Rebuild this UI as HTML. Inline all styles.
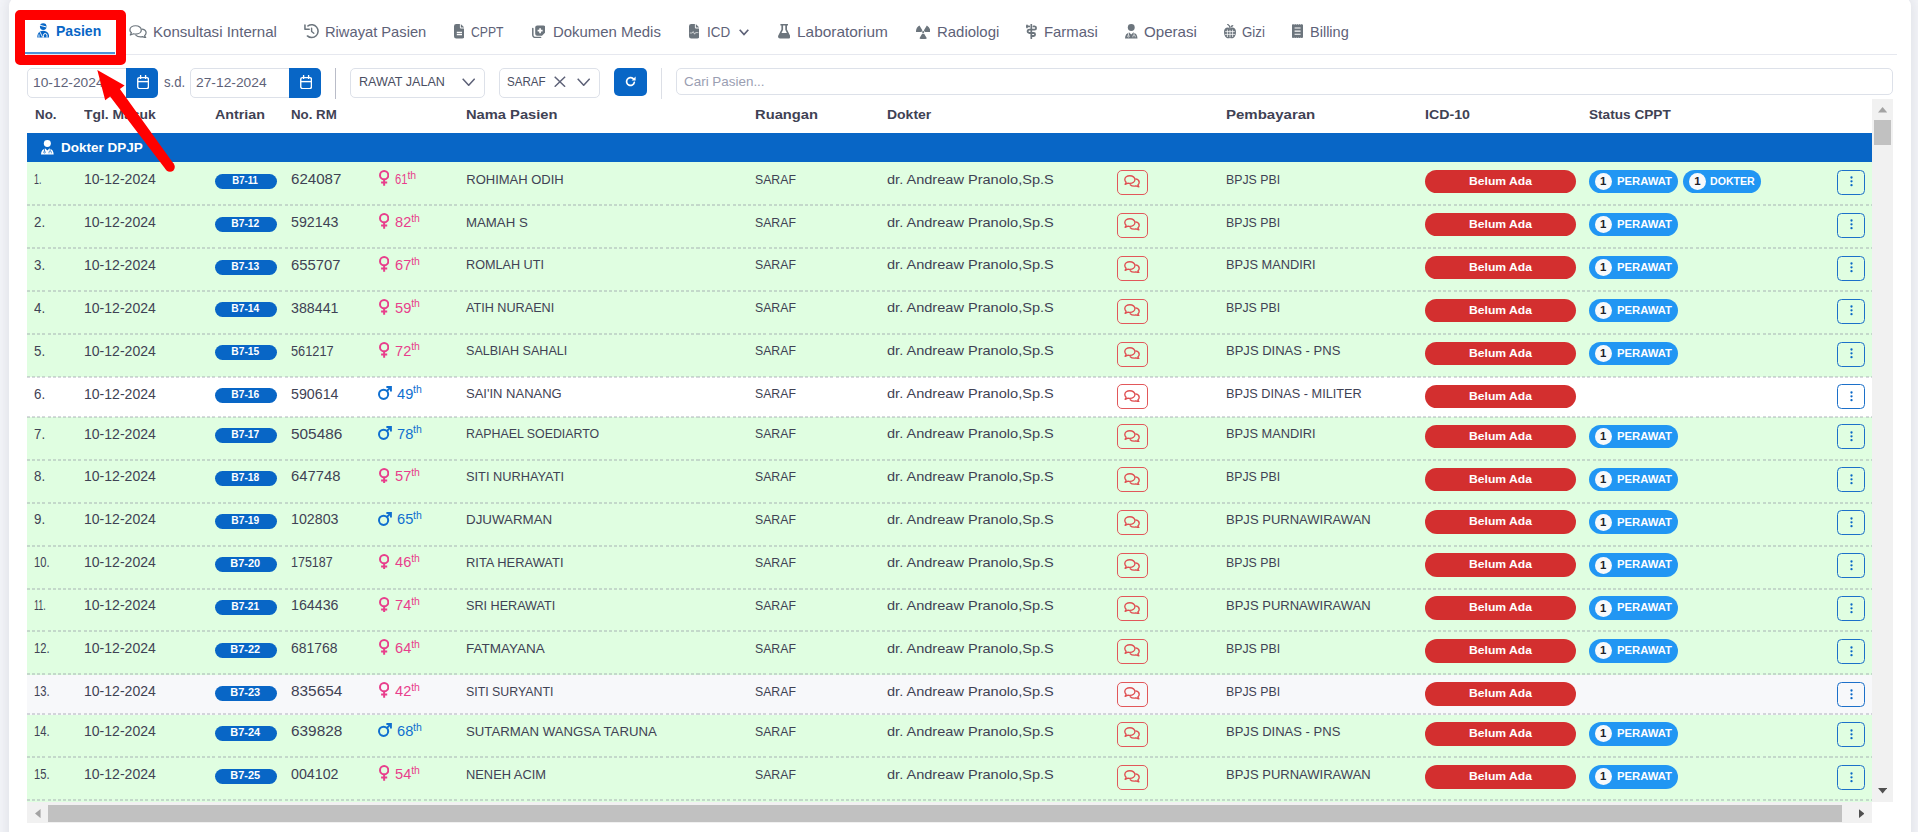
<!DOCTYPE html>
<html lang="id"><head><meta charset="utf-8"><title>Pasien</title>
<style>
html,body{margin:0;padding:0}
body{width:1918px;height:832px;overflow:hidden;background:#f4f5f9;font-family:"Liberation Sans",sans-serif;position:relative;color:#3f4254}
.card{position:absolute;left:9px;top:-3px;width:1902px;height:900px;background:#fff;border-radius:9px;box-shadow:0 0 14px 2px rgba(50,55,80,.105)}
.a{position:absolute}
.t{position:absolute;white-space:nowrap;line-height:21px;font-size:13px;transform-origin:0 0}
.tab{font-size:15px;color:#5e6278;text-decoration:none}
.tab.act{color:#0866c6;font-weight:bold}
.h{font-weight:bold;font-size:13px;color:#3f4254}
.f14{font-size:14px}
.row{position:absolute;left:27px;width:1845px}
.dl{position:absolute;left:27px;width:1845px;height:2px;background:repeating-linear-gradient(90deg,rgba(140,144,158,.34) 0,rgba(140,144,158,.34) 3px,transparent 3px,transparent 5.15px)}
.g{background:#e0fee1}
.w{background:#fff}
.s{background:#f7f8fa}
.q{position:absolute;left:215px;width:62px;height:15px;border-radius:8px;background:#0866c6;color:#fff;font-weight:bold;font-size:10.5px;line-height:13.6px;text-align:center;text-indent:-1px}
.icd{position:absolute;left:1425px;width:151px;height:23.6px;border-radius:12px;background:#d32f2f;color:#fff;font-weight:bold;font-size:11.4px;line-height:22.2px;text-align:center}
.cp{position:absolute;height:23.6px;border-radius:12px;background:#2196f3;color:#fff;font-weight:bold;font-size:11.4px;line-height:24px}
.cp i{position:absolute;left:5.8px;top:3.2px;width:17px;height:17px;border-radius:50%;background:#f8f9fb;color:#1e2129;font-style:normal;text-align:center;line-height:17px;font-size:11.4px}
.cp b{position:absolute;left:28.5px;top:-0.9px;transform-origin:0 0}
.icd,.q{letter-spacing:0}
.icd u,.q u{display:inline-block;text-decoration:none}
.cb{position:absolute;left:1117px;width:31px;height:25px;box-sizing:border-box;border:1px solid #e2575a;border-radius:5px}
.ab{position:absolute;left:1837px;width:28px;height:25px;box-sizing:border-box;border:1px solid #1c70c9;border-radius:4.5px}
button{padding:0;margin:0;background:transparent;appearance:none;-webkit-appearance:none;display:block}
.f{color:#e83e8c}
.m{color:#0f6fd0}
.ag{font-size:12.5px}
.dg{display:inline-block;text-decoration:none;transform-origin:0 0}
.sp{position:absolute;top:-4.15px;font-size:10.5px;line-height:21px;vertical-align:baseline}
.inp{position:absolute;box-sizing:border-box;border:1px solid #dde1e9;background:#fff;border-radius:5px}
.btn{position:absolute;background:#0866c6}
</style></head>
<body>
<div class="card"></div>
<svg class="a" style="left:36.5px;top:23px" width="12.5" height="14.5" viewBox="0 0 14 16" preserveAspectRatio="none"><circle cx="7" cy="3.9" r="3.7" fill="#0866c6"/><path d="M3.5 2.6 L10.6 4.4" stroke="#fff" stroke-width="1.1"/><path d="M0.3 16 C0.3 11.5 2.6 9.2 5.2 8.8 L7 8.6 L8.8 8.8 C11.4 9.2 13.7 11.5 13.7 16 Z" fill="#0866c6"/><path d="M3.2 9.6 L6.4 16 M2.2 16 L2.2 12.6" stroke="#fff" stroke-width="1"/><path d="M7.2 16 V13.6 a2 2 0 0 1 4 0 V16" fill="none" stroke="#fff" stroke-width="1.1"/></svg>
<a id="tab0" class="t tab act" style="left:56px;top:20.4px;transform:scaleX(0.9354);">Pasien</a>
<svg class="a" style="left:128.5px;top:24.5px" width="18" height="13.5" viewBox="0 0 18 14" preserveAspectRatio="none"><path d="M6.6 0.8 C3.3 0.8 0.9 2.7 0.9 5.1 C0.9 6.3 1.5 7.3 2.4 8.1 L1.3 10.4 L4.6 9.1 C5.2 9.3 5.9 9.4 6.6 9.4 C9.9 9.4 12.3 7.5 12.3 5.1 C12.3 2.7 9.9 0.8 6.6 0.8 Z" fill="none" stroke="#6c757d" stroke-width="1.25" stroke-linejoin="round"/><path d="M13.3 4.3 C15.6 4.8 17.1 6.3 17.1 8.1 C17.1 9.3 16.5 10.3 15.6 11.1 L16.7 13.3 L13.4 12.1 C12.8 12.3 12.1 12.4 11.4 12.4 C9.6 12.4 8 11.8 7 10.8" fill="none" stroke="#6c757d" stroke-width="1.25" stroke-linejoin="round" stroke-linecap="round"/></svg>
<a id="tab1" class="t tab" style="left:153px;top:21.3px;transform:scaleX(1.0040);">Konsultasi Internal</a>
<svg class="a" style="left:304px;top:24px" width="15" height="15" viewBox="0 0 15 15" preserveAspectRatio="none"><path d="M4 1.95 A6.4 6.4 0 1 1 3.4 11.95" fill="none" stroke="#6c757d" stroke-width="1.55" stroke-linecap="round"/><path d="M0.95 1.1 V5.3 H5.2" fill="none" stroke="#6c757d" stroke-width="1.55" stroke-linecap="round" stroke-linejoin="round"/><path d="M7.6 4.3 V7.5 L9.8 9.3" fill="none" stroke="#6c757d" stroke-width="1.4" stroke-linecap="round" stroke-linejoin="round"/></svg>
<a id="tab2" class="t tab" style="left:325px;top:21.3px;transform:scaleX(0.9793);">Riwayat Pasien</a>
<svg class="a" style="left:454.1px;top:24.2px" width="10.4" height="14.4" viewBox="0 0 10.4 14.4" preserveAspectRatio="none"><path d="M2.2 0 H5.9 V3.4 a1.1 1.1 0 0 0 1.1 1.1 H10.4 V12.2 a2.2 2.2 0 0 1 -2.2 2.2 H2.2 A2.2 2.2 0 0 1 0 12.2 V2.2 A2.2 2.2 0 0 1 2.2 0 Z" fill="#6c757d"/><path d="M6.8 0.1 L10.3 3.6 H6.8 Z" fill="#6c757d"/><path d="M2.8 8.5 H8 M2.8 10.6 H8" stroke="#fff" stroke-width="1.35"/></svg>
<a id="tab3" class="t tab" style="left:471.25px;top:21.3px;transform:scaleX(0.8122);">CPPT</a>
<svg class="a" style="left:531.6px;top:24.8px" width="13.2" height="13.4" viewBox="0 0 13.2 13.4" preserveAspectRatio="none"><path d="M5.2 0.5 H11.4 A1.8 1.8 0 0 1 13.2 2.3 V7.6 L10 10.8 H5.2 A2 2 0 0 1 3.2 8.8 V2.5 A2 2 0 0 1 5.2 0.5 Z" fill="#6c757d"/><path d="M8.1 3.2 V8.2 M5.6 5.7 H10.6" stroke="#fff" stroke-width="1.7"/><path d="M0.8 3.4 V10 a2.6 2.6 0 0 0 2.6 2.6 H8.6" fill="none" stroke="#6c757d" stroke-width="1.5" stroke-linecap="round"/></svg>
<a id="tab4" class="t tab" style="left:552.5px;top:21.3px;transform:scaleX(0.9955);">Dokumen Medis</a>
<svg class="a" style="left:688.7px;top:24.2px" width="10.4" height="14.4" viewBox="0 0 10.4 14.4" preserveAspectRatio="none"><path d="M2.2 0 H5.9 V3.4 a1.1 1.1 0 0 0 1.1 1.1 H10.4 V12.2 a2.2 2.2 0 0 1 -2.2 2.2 H2.2 A2.2 2.2 0 0 1 0 12.2 V2.2 A2.2 2.2 0 0 1 2.2 0 Z" fill="#6c757d"/><path d="M6.8 0.1 L10.3 3.6 H6.8 Z" fill="#6c757d"/><path d="M0.8 9 H3.2 L4.2 7.6 L5.6 10.2 L6.6 8.6 H9.4" fill="none" stroke="#fff" stroke-width="0.75" stroke-linejoin="round" opacity="0.85"/></svg>
<a id="tab5" class="t tab" style="left:706.7px;top:21.3px;transform:scaleX(0.8977);">ICD</a>
<svg class="a" style="left:777.7px;top:24.3px" width="12.4" height="14.6" viewBox="0 0 12.4 14.6" preserveAspectRatio="none"><path d="M2.4 0 H10 V1.5 H9 V5.4 L12.1 11.6 C12.8 13 11.9 14.6 10.4 14.6 H2 C0.5 14.6 -0.4 13 0.3 11.6 L3.4 5.4 V1.5 H2.4 Z" fill="#6c757d"/><path d="M5.1 1.5 H7.3 V5.8 L8.9 8.9 H3.5 L5.1 5.8 Z" fill="#fff"/></svg>
<a id="tab6" class="t tab" style="left:796.9px;top:21.3px;transform:scaleX(1.0278);">Laboratorium</a>
<svg class="a" style="left:915.5px;top:25px" width="14.3" height="13.5" viewBox="0 0 14.5 13.5" preserveAspectRatio="none"><path d="M3.5 0.4 L6.6 5.6 A1.5 1.5 0 0 0 5.7 7.1 H0 A7.3 7.3 0 0 1 3.5 0.4 Z" fill="#6c757d"/><path d="M11 0.4 L7.9 5.6 A1.5 1.5 0 0 1 8.8 7.1 H14.5 A7.3 7.3 0 0 0 11 0.4 Z" fill="#6c757d"/><path d="M7.25 8.9 A1.6 1.6 0 0 0 8.1 8.6 L11 13.3 A7.3 7.3 0 0 1 3.5 13.3 L6.4 8.6 A1.6 1.6 0 0 0 7.25 8.9 Z" fill="#6c757d"/><circle cx="7.25" cy="7.1" r="1.05" fill="#6c757d"/></svg>
<a id="tab7" class="t tab" style="left:936.5px;top:21.3px;transform:scaleX(0.9953);">Radiologi</a>
<svg class="a" style="left:1026px;top:24px" width="11" height="15" viewBox="0 0 11 15" preserveAspectRatio="none"><path d="M5.3 0.6 V14.4" stroke="#6c757d" stroke-width="1.7" stroke-linecap="round"/><path d="M0.9 2.4 H3.2 M7.4 2.4 H8.6 C10.6 2.4 10.6 5.6 8.6 5.6 H3.4 C1 5.6 1 9 3.4 9 H7.6 C9.6 9 9.6 12 7.6 12 H5.6" fill="none" stroke="#6c757d" stroke-width="1.8" stroke-linecap="round"/><path d="M1 1.4 V3.6" stroke="#6c757d" stroke-width="1.6" stroke-linecap="round"/></svg>
<a id="tab8" class="t tab" style="left:1043.75px;top:21.3px;transform:scaleX(0.9922);">Farmasi</a>
<svg class="a" style="left:1125px;top:24px" width="12.5" height="14.5" viewBox="0 0 13 15" preserveAspectRatio="none"><circle cx="6.5" cy="3.6" r="3.6" fill="#6c757d"/><path d="M0 15 C0 11.2 2 9.2 4.4 8.7 L6.5 10.8 L8.6 8.7 C11 9.2 13 11.2 13 15 Z" fill="#6c757d"/><path d="M3.6 9.4 V11.6 M9.4 9.4 V11" stroke="#fff" stroke-width="0.8"/><circle cx="3.6" cy="12.6" r="0.9" fill="none" stroke="#fff" stroke-width="0.7"/><path d="M8.2 13.8 V12.6 a1.2 1.2 0 0 1 2.4 0 V13.8" fill="none" stroke="#fff" stroke-width="0.7"/></svg>
<a id="tab9" class="t tab" style="left:1144px;top:21.3px;transform:scaleX(1.0070);">Operasi</a>
<svg class="a" style="left:1223.7px;top:24px" width="12" height="14.5" viewBox="0 0 12 14.5" preserveAspectRatio="none"><path d="M6 4.4 C7.4 3.2 9.6 3.2 10.8 4.6 C12.6 6.6 12.2 10.6 10.4 13 C9.4 14.4 7.6 14.6 6 13.9 C4.4 14.6 2.6 14.4 1.6 13 C-0.2 10.6 -0.6 6.6 1.2 4.6 C2.4 3.2 4.6 3.2 6 4.4 Z" fill="#6c757d"/><path d="M3.4 5.6 V13 M6 5.8 V13.4 M8.6 5.6 V13 M1.2 7.6 H10.8 M1 10.4 H11" stroke="#fff" stroke-width="0.75"/><path d="M6 4.2 C6 2.6 5.2 1.2 3.6 0.3" fill="none" stroke="#6c757d" stroke-width="1.2" stroke-linecap="round"/><path d="M6.2 3.4 C6.6 1.6 8 0.8 9.4 1 C9.2 2.6 7.8 3.6 6.2 3.4 Z" fill="#6c757d"/></svg>
<a id="tab10" class="t tab" style="left:1241.9px;top:21.3px;transform:scaleX(0.8842);">Gizi</a>
<svg class="a" style="left:1291.9px;top:24.3px" width="11.2" height="14.2" viewBox="0 0 11.2 14.2" preserveAspectRatio="none"><path d="M0 0 L0.9 0.7 L1.9 0 L2.8 0.7 L3.7 0 L4.7 0.7 L5.6 0 L6.5 0.7 L7.5 0 L8.4 0.7 L9.3 0 L10.3 0.7 L11.2 0 V14.2 L10.3 13.5 L9.3 14.2 L8.4 13.5 L7.5 14.2 L6.5 13.5 L5.6 14.2 L4.7 13.5 L3.7 14.2 L2.8 13.5 L1.9 14.2 L0.9 13.5 L0 14.2 Z" fill="#6c757d"/><path d="M2.6 4 H8.6 M2.6 7.1 H8.6 M2.6 10.2 H8.6" stroke="#fff" stroke-width="1.1"/></svg>
<a id="tab11" class="t tab" style="left:1309.75px;top:21.3px;transform:scaleX(0.9680);">Billing</a>
<svg class="a" style="left:739px;top:28.5px" width="10" height="7" viewBox="0 0 10 7"><path d="M0.7 0.8 L5 5.6 L9.3 0.8" fill="none" stroke="#5e6278" stroke-width="1.7"/></svg>
<div class="a" style="left:27px;top:53.6px;width:1870px;height:1.2px;background:#e6e8ef"></div>
<div class="a" style="left:25px;top:52.2px;width:90px;height:2.2px;background:#4d93da"></div>
<div class="inp" style="left:27px;top:68px;width:102px;height:30px;border-radius:5px 0 0 5px"></div>
<div class="btn" style="left:125.6px;top:67.7px;width:32.2px;height:30.6px;border-radius:0 5px 5px 0"></div>
<svg class="a" style="left:137px;top:74.6px" width="12.2" height="14.4" viewBox="0 0 12.2 14.4" preserveAspectRatio="none"><rect x="0.75" y="2.6" width="10.7" height="11" rx="1.8" fill="none" stroke="#fff" stroke-width="1.4"/><path d="M0.8 6.6 H11.4" stroke="#fff" stroke-width="1.4"/><path d="M3.6 0.6 V3.4 M8.6 0.6 V3.4" stroke="#fff" stroke-width="1.4" stroke-linecap="round"/></svg>
<span id="d1" class="t " style="left:33px;top:72.3px;transform:scaleX(1.0624);color:#5e6278">10-12-2024</span>
<span id="sd" class="t f14" style="left:163.7px;top:71.8px;transform:scaleX(0.9412);color:#5e6278">s.d.</span>
<div class="inp" style="left:190px;top:68px;width:102px;height:30px;border-radius:5px 0 0 5px"></div>
<div class="btn" style="left:288.7px;top:67.7px;width:32.2px;height:30.6px;border-radius:0 5px 5px 0"></div>
<svg class="a" style="left:300px;top:74.6px" width="12.2" height="14.4" viewBox="0 0 12.2 14.4" preserveAspectRatio="none"><rect x="0.75" y="2.6" width="10.7" height="11" rx="1.8" fill="none" stroke="#fff" stroke-width="1.4"/><path d="M0.8 6.6 H11.4" stroke="#fff" stroke-width="1.4"/><path d="M3.6 0.6 V3.4 M8.6 0.6 V3.4" stroke="#fff" stroke-width="1.4" stroke-linecap="round"/></svg>
<span id="d2" class="t " style="left:195.6px;top:72.3px;transform:scaleX(1.0624);color:#5e6278">27-12-2024</span>
<div class="a" style="left:334.8px;top:67.5px;width:1px;height:31px;background:#b9bcc8"></div>
<div class="inp" style="left:350px;top:68px;width:135px;height:29.6px"></div>
<span id="sel1" class="t " style="left:358.5px;top:71px;transform:scaleX(0.9667);color:#4a4e62">RAWAT JALAN</span>
<svg class="a" style="left:461.5px;top:77.6px" width="13.4" height="8.6" viewBox="0 0 13.4 8.6"><path d="M0.7 0.8 L6.7 7.3 L12.7 0.8" fill="none" stroke="#5e6278" stroke-width="1.5"/></svg>
<div class="inp" style="left:499px;top:68px;width:101px;height:29.6px"></div>
<span id="sel2" class="t " style="left:507px;top:71px;transform:scaleX(0.8929);color:#4a4e62">SARAF</span>
<svg class="a" style="left:554px;top:76px" width="11.8" height="11.4" viewBox="0 0 11.8 11.4"><path d="M0.7 0.7 L11.1 10.7 M11.1 0.7 L0.7 10.7" fill="none" stroke="#5e6278" stroke-width="1.5"/></svg>
<svg class="a" style="left:576.5px;top:77.6px" width="13.4" height="8.6" viewBox="0 0 13.4 8.6"><path d="M0.7 0.8 L6.7 7.3 L12.7 0.8" fill="none" stroke="#5e6278" stroke-width="1.5"/></svg>
<div class="btn" style="left:614px;top:67.5px;width:33px;height:28.2px;border-radius:5px"></div>
<svg class="a" style="left:625px;top:76px" width="11" height="11" viewBox="0 0 11 11" preserveAspectRatio="none"><path d="M9.3 6.3 A3.9 3.9 0 1 1 8.2 2.7" fill="none" stroke="#fff" stroke-width="1.7" stroke-linecap="round"/><path d="M6.6 4.6 L10.6 4.6 L10.6 0.6 Z" fill="#fff"/></svg>
<div class="a" style="left:661px;top:67.5px;width:1px;height:31px;background:#dcdfe6"></div>
<div class="inp" style="left:676px;top:68px;width:1217px;height:26.6px"></div>
<span id="search" class="t " style="left:684.4px;top:71px;transform:scaleX(1.0327);color:#9a9eb2">Cari Pasien...</span>
<span id="h0" class="t h" style="left:34.75px;top:104.3px;transform:scaleX(1.0261);">No.</span>
<span id="h1" class="t h" style="left:84.4px;top:104.3px;transform:scaleX(1.0694);">Tgl. Masuk</span>
<span id="h2" class="t h" style="left:215px;top:104.3px;transform:scaleX(1.0989);">Antrian</span>
<span id="h3" class="t h" style="left:290.5px;top:104.3px;transform:scaleX(1.0216);">No. RM</span>
<span id="h4" class="t h" style="left:466px;top:104.3px;transform:scaleX(1.1305);">Nama Pasien</span>
<span id="h5" class="t h" style="left:755px;top:104.3px;transform:scaleX(1.1326);">Ruangan</span>
<span id="h6" class="t h" style="left:887px;top:104.3px;transform:scaleX(1.0744);">Dokter</span>
<span id="h7" class="t h" style="left:1226px;top:104.3px;transform:scaleX(1.1542);">Pembayaran</span>
<span id="h8" class="t h" style="left:1425px;top:104.3px;transform:scaleX(1.0926);">ICD-10</span>
<span id="h9" class="t h" style="left:1589px;top:104.3px;transform:scaleX(1.0479);">Status CPPT</span>
<div class="a" style="left:27px;top:133px;width:1845px;height:29.8px;background:#0866c6"></div>
<svg class="a" style="left:41px;top:140px" width="12.7" height="14.5" viewBox="0 0 13 15" preserveAspectRatio="none"><circle cx="6.5" cy="3.6" r="3.6" fill="#fff"/><path d="M0 15 C0 11.2 2 9.2 4.4 8.7 L6.5 10.8 L8.6 8.7 C11 9.2 13 11.2 13 15 Z" fill="#fff"/><path d="M3.6 9.4 V11.6 M9.4 9.4 V11" stroke="#0866c6" stroke-width="0.8"/><circle cx="3.6" cy="12.6" r="0.9" fill="none" stroke="#0866c6" stroke-width="0.7"/><path d="M8.2 13.8 V12.6 a1.2 1.2 0 0 1 2.4 0 V13.8" fill="none" stroke="#0866c6" stroke-width="0.7"/></svg>
<span id="grp" class="t h" style="left:61.2px;top:137.4px;transform:scaleX(1.0381);color:#fff">Dokter DPJP</span>
<div class="row g" style="top:162.46px;height:42.94px"></div>
<span id="no1" class="t f14" style="left:34px;top:168.81px;transform:scaleX(0.6332);">1.</span>
<span id="dt1" class="t f14" style="left:83.75px;top:168.81px;transform:scaleX(1.0031);">10-12-2024</span>
<span id="q1" class="q" style="top:173.66px"><u style="transform:scaleX(0.910)">B7-11</u></span>
<span id="rm1" class="t f14" style="left:291px;top:168.81px;transform:scaleX(1.0777);">624087</span>
<svg class="a" style="left:378.7px;top:170.06px" width="10.3" height="15.7" viewBox="0 0 10.3 15.7" preserveAspectRatio="none"><circle cx="5.15" cy="5.15" r="4.15" fill="none" stroke="#e83e8c" stroke-width="2"/><path d="M5.15 9.3 V15.7 M2.1 12.5 H8.2" stroke="#e83e8c" stroke-width="2"/></svg>
<span id="ag1" class="t f14 f" style="left:394.6px;top:168.81px"><u class="dg" style="transform:scaleX(0.804)">61</u><sup class="sp" style="left:12.83px">th</sup></span>
<span id="nm1" class="t " style="left:466.25px;top:168.56px;transform:scaleX(1.0000);">ROHIMAH ODIH</span>
<span id="ru1" class="t " style="left:755px;top:168.56px;transform:scaleX(0.9436);">SARAF</span>
<span id="dr1" class="t " style="left:887px;top:168.56px;transform:scaleX(1.1201);">dr. Andreaw Pranolo,Sp.S</span>
<button class="cb" style="top:169.76px"></button>
<svg class="a" style="left:1124px;top:175.06px" width="16" height="12.5" viewBox="0 0 18 14" preserveAspectRatio="none"><path d="M6.6 0.8 C3.3 0.8 0.9 2.7 0.9 5.1 C0.9 6.3 1.5 7.3 2.4 8.1 L1.3 10.4 L4.6 9.1 C5.2 9.3 5.9 9.4 6.6 9.4 C9.9 9.4 12.3 7.5 12.3 5.1 C12.3 2.7 9.9 0.8 6.6 0.8 Z" fill="none" stroke="#df4f52" stroke-width="1.55" stroke-linejoin="round"/><path d="M13.3 4.3 C15.6 4.8 17.1 6.3 17.1 8.1 C17.1 9.3 16.5 10.3 15.6 11.1 L16.7 13.3 L13.4 12.1 C12.8 12.3 12.1 12.4 11.4 12.4 C9.6 12.4 8 11.8 7 10.8" fill="none" stroke="#df4f52" stroke-width="1.55" stroke-linejoin="round" stroke-linecap="round"/></svg>
<span id="py1" class="t " style="left:1226.25px;top:168.56px;transform:scaleX(0.9469);">BPJS PBI</span>
<span class="icd" style="top:169.86px"><u style="transform:scaleX(1.066)">Belum Ada</u></span>
<span class="cp" style="left:1588.8px;top:169.86px;width:89px"><i>1</i><b style="transform:scaleX(.99)">PERAWAT</b></span>
<span class="cp" style="left:1683px;top:169.86px;width:78px"><i>1</i><b style="transform:scaleX(.93);left:27.2px">DOKTER</b></span>
<button class="ab" style="top:169.76px"></button>
<svg class="a" style="left:1849.6px;top:176.36px" width="3" height="12" viewBox="0 0 3 12"><circle cx="1.5" cy="1.5" r="1.15" fill="#0866c6"/><circle cx="1.5" cy="5.35" r="1.15" fill="#0866c6"/><circle cx="1.5" cy="9.2" r="1.15" fill="#0866c6"/></svg>
<div class="row g" style="top:205.40px;height:42.94px"></div>
<span id="no2" class="t f14" style="left:34px;top:211.75px;transform:scaleX(0.9519);">2.</span>
<span id="dt2" class="t f14" style="left:83.75px;top:211.75px;transform:scaleX(1.0031);">10-12-2024</span>
<span id="q2" class="q" style="top:216.60px"><u style="transform:scaleX(0.977)">B7-12</u></span>
<span id="rm2" class="t f14" style="left:291px;top:211.75px;transform:scaleX(1.0157);">592143</span>
<svg class="a" style="left:378.7px;top:213px" width="10.3" height="15.7" viewBox="0 0 10.3 15.7" preserveAspectRatio="none"><circle cx="5.15" cy="5.15" r="4.15" fill="none" stroke="#e83e8c" stroke-width="2"/><path d="M5.15 9.3 V15.7 M2.1 12.5 H8.2" stroke="#e83e8c" stroke-width="2"/></svg>
<span id="ag2" class="t f14 f" style="left:394.6px;top:211.75px"><u class="dg" style="transform:scaleX(1.044)">82</u><sup class="sp" style="left:16.55px">th</sup></span>
<span id="nm2" class="t " style="left:466.25px;top:211.5px;transform:scaleX(1.0178);">MAMAH S</span>
<span id="ru2" class="t " style="left:755px;top:211.5px;transform:scaleX(0.9436);">SARAF</span>
<span id="dr2" class="t " style="left:887px;top:211.5px;transform:scaleX(1.1201);">dr. Andreaw Pranolo,Sp.S</span>
<button class="cb" style="top:212.70px"></button>
<svg class="a" style="left:1124px;top:218px" width="16" height="12.5" viewBox="0 0 18 14" preserveAspectRatio="none"><path d="M6.6 0.8 C3.3 0.8 0.9 2.7 0.9 5.1 C0.9 6.3 1.5 7.3 2.4 8.1 L1.3 10.4 L4.6 9.1 C5.2 9.3 5.9 9.4 6.6 9.4 C9.9 9.4 12.3 7.5 12.3 5.1 C12.3 2.7 9.9 0.8 6.6 0.8 Z" fill="none" stroke="#df4f52" stroke-width="1.55" stroke-linejoin="round"/><path d="M13.3 4.3 C15.6 4.8 17.1 6.3 17.1 8.1 C17.1 9.3 16.5 10.3 15.6 11.1 L16.7 13.3 L13.4 12.1 C12.8 12.3 12.1 12.4 11.4 12.4 C9.6 12.4 8 11.8 7 10.8" fill="none" stroke="#df4f52" stroke-width="1.55" stroke-linejoin="round" stroke-linecap="round"/></svg>
<span id="py2" class="t " style="left:1226.25px;top:211.5px;transform:scaleX(0.9469);">BPJS PBI</span>
<span class="icd" style="top:212.80px"><u style="transform:scaleX(1.066)">Belum Ada</u></span>
<span class="cp" style="left:1588.8px;top:212.80px;width:89px"><i>1</i><b style="transform:scaleX(.99)">PERAWAT</b></span>
<button class="ab" style="top:212.70px"></button>
<svg class="a" style="left:1849.6px;top:219.30px" width="3" height="12" viewBox="0 0 3 12"><circle cx="1.5" cy="1.5" r="1.15" fill="#0866c6"/><circle cx="1.5" cy="5.35" r="1.15" fill="#0866c6"/><circle cx="1.5" cy="9.2" r="1.15" fill="#0866c6"/></svg>
<div class="row g" style="top:248.34px;height:42.94px"></div>
<span id="no3" class="t f14" style="left:34px;top:254.69px;transform:scaleX(0.9519);">3.</span>
<span id="dt3" class="t f14" style="left:83.75px;top:254.69px;transform:scaleX(1.0031);">10-12-2024</span>
<span id="q3" class="q" style="top:259.54px"><u style="transform:scaleX(0.977)">B7-13</u></span>
<span id="rm3" class="t f14" style="left:291px;top:254.69px;transform:scaleX(1.0574);">655707</span>
<svg class="a" style="left:378.7px;top:255.94px" width="10.3" height="15.7" viewBox="0 0 10.3 15.7" preserveAspectRatio="none"><circle cx="5.15" cy="5.15" r="4.15" fill="none" stroke="#e83e8c" stroke-width="2"/><path d="M5.15 9.3 V15.7 M2.1 12.5 H8.2" stroke="#e83e8c" stroke-width="2"/></svg>
<span id="ag3" class="t f14 f" style="left:394.6px;top:254.69px"><u class="dg" style="transform:scaleX(1.044)">67</u><sup class="sp" style="left:16.55px">th</sup></span>
<span id="nm3" class="t " style="left:466.25px;top:254.44px;transform:scaleX(0.9729);">ROMLAH UTI</span>
<span id="ru3" class="t " style="left:755px;top:254.44px;transform:scaleX(0.9436);">SARAF</span>
<span id="dr3" class="t " style="left:887px;top:254.44px;transform:scaleX(1.1201);">dr. Andreaw Pranolo,Sp.S</span>
<button class="cb" style="top:255.64px"></button>
<svg class="a" style="left:1124px;top:260.94px" width="16" height="12.5" viewBox="0 0 18 14" preserveAspectRatio="none"><path d="M6.6 0.8 C3.3 0.8 0.9 2.7 0.9 5.1 C0.9 6.3 1.5 7.3 2.4 8.1 L1.3 10.4 L4.6 9.1 C5.2 9.3 5.9 9.4 6.6 9.4 C9.9 9.4 12.3 7.5 12.3 5.1 C12.3 2.7 9.9 0.8 6.6 0.8 Z" fill="none" stroke="#df4f52" stroke-width="1.55" stroke-linejoin="round"/><path d="M13.3 4.3 C15.6 4.8 17.1 6.3 17.1 8.1 C17.1 9.3 16.5 10.3 15.6 11.1 L16.7 13.3 L13.4 12.1 C12.8 12.3 12.1 12.4 11.4 12.4 C9.6 12.4 8 11.8 7 10.8" fill="none" stroke="#df4f52" stroke-width="1.55" stroke-linejoin="round" stroke-linecap="round"/></svg>
<span id="py3" class="t " style="left:1226.25px;top:254.44px;transform:scaleX(0.9850);">BPJS MANDIRI</span>
<span class="icd" style="top:255.74px"><u style="transform:scaleX(1.066)">Belum Ada</u></span>
<span class="cp" style="left:1588.8px;top:255.74px;width:89px"><i>1</i><b style="transform:scaleX(.99)">PERAWAT</b></span>
<button class="ab" style="top:255.64px"></button>
<svg class="a" style="left:1849.6px;top:262.24px" width="3" height="12" viewBox="0 0 3 12"><circle cx="1.5" cy="1.5" r="1.15" fill="#0866c6"/><circle cx="1.5" cy="5.35" r="1.15" fill="#0866c6"/><circle cx="1.5" cy="9.2" r="1.15" fill="#0866c6"/></svg>
<div class="row g" style="top:291.28px;height:42.94px"></div>
<span id="no4" class="t f14" style="left:34px;top:297.63px;transform:scaleX(0.9519);">4.</span>
<span id="dt4" class="t f14" style="left:83.75px;top:297.63px;transform:scaleX(1.0031);">10-12-2024</span>
<span id="q4" class="q" style="top:302.48px"><u style="transform:scaleX(0.977)">B7-14</u></span>
<span id="rm4" class="t f14" style="left:291px;top:297.63px;transform:scaleX(1.0157);">388441</span>
<svg class="a" style="left:378.7px;top:298.88px" width="10.3" height="15.7" viewBox="0 0 10.3 15.7" preserveAspectRatio="none"><circle cx="5.15" cy="5.15" r="4.15" fill="none" stroke="#e83e8c" stroke-width="2"/><path d="M5.15 9.3 V15.7 M2.1 12.5 H8.2" stroke="#e83e8c" stroke-width="2"/></svg>
<span id="ag4" class="t f14 f" style="left:394.6px;top:297.63px"><u class="dg" style="transform:scaleX(1.044)">59</u><sup class="sp" style="left:16.55px">th</sup></span>
<span id="nm4" class="t " style="left:466.25px;top:297.38px;transform:scaleX(0.9723);">ATIH NURAENI</span>
<span id="ru4" class="t " style="left:755px;top:297.38px;transform:scaleX(0.9436);">SARAF</span>
<span id="dr4" class="t " style="left:887px;top:297.38px;transform:scaleX(1.1201);">dr. Andreaw Pranolo,Sp.S</span>
<button class="cb" style="top:298.58px"></button>
<svg class="a" style="left:1124px;top:303.88px" width="16" height="12.5" viewBox="0 0 18 14" preserveAspectRatio="none"><path d="M6.6 0.8 C3.3 0.8 0.9 2.7 0.9 5.1 C0.9 6.3 1.5 7.3 2.4 8.1 L1.3 10.4 L4.6 9.1 C5.2 9.3 5.9 9.4 6.6 9.4 C9.9 9.4 12.3 7.5 12.3 5.1 C12.3 2.7 9.9 0.8 6.6 0.8 Z" fill="none" stroke="#df4f52" stroke-width="1.55" stroke-linejoin="round"/><path d="M13.3 4.3 C15.6 4.8 17.1 6.3 17.1 8.1 C17.1 9.3 16.5 10.3 15.6 11.1 L16.7 13.3 L13.4 12.1 C12.8 12.3 12.1 12.4 11.4 12.4 C9.6 12.4 8 11.8 7 10.8" fill="none" stroke="#df4f52" stroke-width="1.55" stroke-linejoin="round" stroke-linecap="round"/></svg>
<span id="py4" class="t " style="left:1226.25px;top:297.38px;transform:scaleX(0.9469);">BPJS PBI</span>
<span class="icd" style="top:298.68px"><u style="transform:scaleX(1.066)">Belum Ada</u></span>
<span class="cp" style="left:1588.8px;top:298.68px;width:89px"><i>1</i><b style="transform:scaleX(.99)">PERAWAT</b></span>
<button class="ab" style="top:298.58px"></button>
<svg class="a" style="left:1849.6px;top:305.18px" width="3" height="12" viewBox="0 0 3 12"><circle cx="1.5" cy="1.5" r="1.15" fill="#0866c6"/><circle cx="1.5" cy="5.35" r="1.15" fill="#0866c6"/><circle cx="1.5" cy="9.2" r="1.15" fill="#0866c6"/></svg>
<div class="row g" style="top:334.22px;height:42.94px"></div>
<span id="no5" class="t f14" style="left:34px;top:340.57px;transform:scaleX(0.9519);">5.</span>
<span id="dt5" class="t f14" style="left:83.75px;top:340.57px;transform:scaleX(1.0031);">10-12-2024</span>
<span id="q5" class="q" style="top:345.42px"><u style="transform:scaleX(0.977)">B7-15</u></span>
<span id="rm5" class="t f14" style="left:291px;top:340.57px;transform:scaleX(0.9129);">561217</span>
<svg class="a" style="left:378.7px;top:341.82px" width="10.3" height="15.7" viewBox="0 0 10.3 15.7" preserveAspectRatio="none"><circle cx="5.15" cy="5.15" r="4.15" fill="none" stroke="#e83e8c" stroke-width="2"/><path d="M5.15 9.3 V15.7 M2.1 12.5 H8.2" stroke="#e83e8c" stroke-width="2"/></svg>
<span id="ag5" class="t f14 f" style="left:394.6px;top:340.57px"><u class="dg" style="transform:scaleX(1.044)">72</u><sup class="sp" style="left:16.55px">th</sup></span>
<span id="nm5" class="t " style="left:466.25px;top:340.32px;transform:scaleX(0.9663);">SALBIAH SAHALI</span>
<span id="ru5" class="t " style="left:755px;top:340.32px;transform:scaleX(0.9436);">SARAF</span>
<span id="dr5" class="t " style="left:887px;top:340.32px;transform:scaleX(1.1201);">dr. Andreaw Pranolo,Sp.S</span>
<button class="cb" style="top:341.52px"></button>
<svg class="a" style="left:1124px;top:346.82px" width="16" height="12.5" viewBox="0 0 18 14" preserveAspectRatio="none"><path d="M6.6 0.8 C3.3 0.8 0.9 2.7 0.9 5.1 C0.9 6.3 1.5 7.3 2.4 8.1 L1.3 10.4 L4.6 9.1 C5.2 9.3 5.9 9.4 6.6 9.4 C9.9 9.4 12.3 7.5 12.3 5.1 C12.3 2.7 9.9 0.8 6.6 0.8 Z" fill="none" stroke="#df4f52" stroke-width="1.55" stroke-linejoin="round"/><path d="M13.3 4.3 C15.6 4.8 17.1 6.3 17.1 8.1 C17.1 9.3 16.5 10.3 15.6 11.1 L16.7 13.3 L13.4 12.1 C12.8 12.3 12.1 12.4 11.4 12.4 C9.6 12.4 8 11.8 7 10.8" fill="none" stroke="#df4f52" stroke-width="1.55" stroke-linejoin="round" stroke-linecap="round"/></svg>
<span id="py5" class="t " style="left:1226.25px;top:340.32px;transform:scaleX(1.0018);">BPJS DINAS - PNS</span>
<span class="icd" style="top:341.62px"><u style="transform:scaleX(1.066)">Belum Ada</u></span>
<span class="cp" style="left:1588.8px;top:341.62px;width:89px"><i>1</i><b style="transform:scaleX(.99)">PERAWAT</b></span>
<button class="ab" style="top:341.52px"></button>
<svg class="a" style="left:1849.6px;top:348.12px" width="3" height="12" viewBox="0 0 3 12"><circle cx="1.5" cy="1.5" r="1.15" fill="#0866c6"/><circle cx="1.5" cy="5.35" r="1.15" fill="#0866c6"/><circle cx="1.5" cy="9.2" r="1.15" fill="#0866c6"/></svg>
<div class="row w" style="top:377.16px;height:40.00px"></div>
<span id="no6" class="t f14" style="left:34px;top:383.51px;transform:scaleX(0.9519);">6.</span>
<span id="dt6" class="t f14" style="left:83.75px;top:383.51px;transform:scaleX(1.0031);">10-12-2024</span>
<span id="q6" class="q" style="top:388.36px"><u style="transform:scaleX(0.977)">B7-16</u></span>
<span id="rm6" class="t f14" style="left:291px;top:383.51px;transform:scaleX(1.0157);">590614</span>
<svg class="a" style="left:378.1px;top:385.76px" width="13.9" height="13.9" viewBox="0 0 13.9 13.9" preserveAspectRatio="none"><circle cx="5.6" cy="8.3" r="4.6" fill="none" stroke="#0f6fd0" stroke-width="2"/><path d="M8.8 5.1 L12.4 1.5" stroke="#0f6fd0" stroke-width="2"/><path d="M8.4 0 H13.9 V5.5 L12 5.5 L12 1.9 L8.4 1.9 Z" fill="#0f6fd0"/></svg>
<span id="ag6" class="t f14 m" style="left:396.5px;top:383.51px"><u class="dg" style="transform:scaleX(1.044)">49</u><sup class="sp" style="left:16.55px">th</sup></span>
<span id="nm6" class="t " style="left:466.25px;top:383.26px;transform:scaleX(1.0008);">SAI'IN NANANG</span>
<span id="ru6" class="t " style="left:755px;top:383.26px;transform:scaleX(0.9436);">SARAF</span>
<span id="dr6" class="t " style="left:887px;top:383.26px;transform:scaleX(1.1201);">dr. Andreaw Pranolo,Sp.S</span>
<button class="cb" style="top:384.46px"></button>
<svg class="a" style="left:1124px;top:389.76px" width="16" height="12.5" viewBox="0 0 18 14" preserveAspectRatio="none"><path d="M6.6 0.8 C3.3 0.8 0.9 2.7 0.9 5.1 C0.9 6.3 1.5 7.3 2.4 8.1 L1.3 10.4 L4.6 9.1 C5.2 9.3 5.9 9.4 6.6 9.4 C9.9 9.4 12.3 7.5 12.3 5.1 C12.3 2.7 9.9 0.8 6.6 0.8 Z" fill="none" stroke="#df4f52" stroke-width="1.55" stroke-linejoin="round"/><path d="M13.3 4.3 C15.6 4.8 17.1 6.3 17.1 8.1 C17.1 9.3 16.5 10.3 15.6 11.1 L16.7 13.3 L13.4 12.1 C12.8 12.3 12.1 12.4 11.4 12.4 C9.6 12.4 8 11.8 7 10.8" fill="none" stroke="#df4f52" stroke-width="1.55" stroke-linejoin="round" stroke-linecap="round"/></svg>
<span id="py6" class="t " style="left:1226.25px;top:383.26px;transform:scaleX(0.9787);">BPJS DINAS - MILITER</span>
<span class="icd" style="top:384.56px"><u style="transform:scaleX(1.066)">Belum Ada</u></span>
<button class="ab" style="top:384.46px"></button>
<svg class="a" style="left:1849.6px;top:391.06px" width="3" height="12" viewBox="0 0 3 12"><circle cx="1.5" cy="1.5" r="1.15" fill="#0866c6"/><circle cx="1.5" cy="5.35" r="1.15" fill="#0866c6"/><circle cx="1.5" cy="9.2" r="1.15" fill="#0866c6"/></svg>
<div class="row g" style="top:417.16px;height:42.94px"></div>
<span id="no7" class="t f14" style="left:34px;top:423.51px;transform:scaleX(0.9519);">7.</span>
<span id="dt7" class="t f14" style="left:83.75px;top:423.51px;transform:scaleX(1.0031);">10-12-2024</span>
<span id="q7" class="q" style="top:428.36px"><u style="transform:scaleX(0.977)">B7-17</u></span>
<span id="rm7" class="t f14" style="left:291px;top:423.51px;transform:scaleX(1.0981);">505486</span>
<svg class="a" style="left:378.1px;top:425.76px" width="13.9" height="13.9" viewBox="0 0 13.9 13.9" preserveAspectRatio="none"><circle cx="5.6" cy="8.3" r="4.6" fill="none" stroke="#0f6fd0" stroke-width="2"/><path d="M8.8 5.1 L12.4 1.5" stroke="#0f6fd0" stroke-width="2"/><path d="M8.4 0 H13.9 V5.5 L12 5.5 L12 1.9 L8.4 1.9 Z" fill="#0f6fd0"/></svg>
<span id="ag7" class="t f14 m" style="left:396.5px;top:423.51px"><u class="dg" style="transform:scaleX(1.044)">78</u><sup class="sp" style="left:16.55px">th</sup></span>
<span id="nm7" class="t " style="left:466.25px;top:423.26px;transform:scaleX(0.9523);">RAPHAEL SOEDIARTO</span>
<span id="ru7" class="t " style="left:755px;top:423.26px;transform:scaleX(0.9436);">SARAF</span>
<span id="dr7" class="t " style="left:887px;top:423.26px;transform:scaleX(1.1201);">dr. Andreaw Pranolo,Sp.S</span>
<button class="cb" style="top:424.46px"></button>
<svg class="a" style="left:1124px;top:429.76px" width="16" height="12.5" viewBox="0 0 18 14" preserveAspectRatio="none"><path d="M6.6 0.8 C3.3 0.8 0.9 2.7 0.9 5.1 C0.9 6.3 1.5 7.3 2.4 8.1 L1.3 10.4 L4.6 9.1 C5.2 9.3 5.9 9.4 6.6 9.4 C9.9 9.4 12.3 7.5 12.3 5.1 C12.3 2.7 9.9 0.8 6.6 0.8 Z" fill="none" stroke="#df4f52" stroke-width="1.55" stroke-linejoin="round"/><path d="M13.3 4.3 C15.6 4.8 17.1 6.3 17.1 8.1 C17.1 9.3 16.5 10.3 15.6 11.1 L16.7 13.3 L13.4 12.1 C12.8 12.3 12.1 12.4 11.4 12.4 C9.6 12.4 8 11.8 7 10.8" fill="none" stroke="#df4f52" stroke-width="1.55" stroke-linejoin="round" stroke-linecap="round"/></svg>
<span id="py7" class="t " style="left:1226.25px;top:423.26px;transform:scaleX(0.9850);">BPJS MANDIRI</span>
<span class="icd" style="top:424.56px"><u style="transform:scaleX(1.066)">Belum Ada</u></span>
<span class="cp" style="left:1588.8px;top:424.56px;width:89px"><i>1</i><b style="transform:scaleX(.99)">PERAWAT</b></span>
<button class="ab" style="top:424.46px"></button>
<svg class="a" style="left:1849.6px;top:431.06px" width="3" height="12" viewBox="0 0 3 12"><circle cx="1.5" cy="1.5" r="1.15" fill="#0866c6"/><circle cx="1.5" cy="5.35" r="1.15" fill="#0866c6"/><circle cx="1.5" cy="9.2" r="1.15" fill="#0866c6"/></svg>
<div class="row g" style="top:460.10px;height:42.94px"></div>
<span id="no8" class="t f14" style="left:34px;top:466.45px;transform:scaleX(0.9519);">8.</span>
<span id="dt8" class="t f14" style="left:83.75px;top:466.45px;transform:scaleX(1.0031);">10-12-2024</span>
<span id="q8" class="q" style="top:471.30px"><u style="transform:scaleX(0.977)">B7-18</u></span>
<span id="rm8" class="t f14" style="left:291px;top:466.45px;transform:scaleX(1.0574);">647748</span>
<svg class="a" style="left:378.7px;top:467.7px" width="10.3" height="15.7" viewBox="0 0 10.3 15.7" preserveAspectRatio="none"><circle cx="5.15" cy="5.15" r="4.15" fill="none" stroke="#e83e8c" stroke-width="2"/><path d="M5.15 9.3 V15.7 M2.1 12.5 H8.2" stroke="#e83e8c" stroke-width="2"/></svg>
<span id="ag8" class="t f14 f" style="left:394.6px;top:466.45px"><u class="dg" style="transform:scaleX(1.044)">57</u><sup class="sp" style="left:16.55px">th</sup></span>
<span id="nm8" class="t " style="left:466.25px;top:466.2px;transform:scaleX(0.9832);">SITI NURHAYATI</span>
<span id="ru8" class="t " style="left:755px;top:466.2px;transform:scaleX(0.9436);">SARAF</span>
<span id="dr8" class="t " style="left:887px;top:466.2px;transform:scaleX(1.1201);">dr. Andreaw Pranolo,Sp.S</span>
<button class="cb" style="top:467.40px"></button>
<svg class="a" style="left:1124px;top:472.7px" width="16" height="12.5" viewBox="0 0 18 14" preserveAspectRatio="none"><path d="M6.6 0.8 C3.3 0.8 0.9 2.7 0.9 5.1 C0.9 6.3 1.5 7.3 2.4 8.1 L1.3 10.4 L4.6 9.1 C5.2 9.3 5.9 9.4 6.6 9.4 C9.9 9.4 12.3 7.5 12.3 5.1 C12.3 2.7 9.9 0.8 6.6 0.8 Z" fill="none" stroke="#df4f52" stroke-width="1.55" stroke-linejoin="round"/><path d="M13.3 4.3 C15.6 4.8 17.1 6.3 17.1 8.1 C17.1 9.3 16.5 10.3 15.6 11.1 L16.7 13.3 L13.4 12.1 C12.8 12.3 12.1 12.4 11.4 12.4 C9.6 12.4 8 11.8 7 10.8" fill="none" stroke="#df4f52" stroke-width="1.55" stroke-linejoin="round" stroke-linecap="round"/></svg>
<span id="py8" class="t " style="left:1226.25px;top:466.2px;transform:scaleX(0.9469);">BPJS PBI</span>
<span class="icd" style="top:467.50px"><u style="transform:scaleX(1.066)">Belum Ada</u></span>
<span class="cp" style="left:1588.8px;top:467.50px;width:89px"><i>1</i><b style="transform:scaleX(.99)">PERAWAT</b></span>
<button class="ab" style="top:467.40px"></button>
<svg class="a" style="left:1849.6px;top:474.00px" width="3" height="12" viewBox="0 0 3 12"><circle cx="1.5" cy="1.5" r="1.15" fill="#0866c6"/><circle cx="1.5" cy="5.35" r="1.15" fill="#0866c6"/><circle cx="1.5" cy="9.2" r="1.15" fill="#0866c6"/></svg>
<div class="row g" style="top:503.04px;height:42.94px"></div>
<span id="no9" class="t f14" style="left:34px;top:509.39px;transform:scaleX(0.9519);">9.</span>
<span id="dt9" class="t f14" style="left:83.75px;top:509.39px;transform:scaleX(1.0031);">10-12-2024</span>
<span id="q9" class="q" style="top:514.24px"><u style="transform:scaleX(0.977)">B7-19</u></span>
<span id="rm9" class="t f14" style="left:291px;top:509.39px;transform:scaleX(1.0157);">102803</span>
<svg class="a" style="left:378.1px;top:511.64px" width="13.9" height="13.9" viewBox="0 0 13.9 13.9" preserveAspectRatio="none"><circle cx="5.6" cy="8.3" r="4.6" fill="none" stroke="#0f6fd0" stroke-width="2"/><path d="M8.8 5.1 L12.4 1.5" stroke="#0f6fd0" stroke-width="2"/><path d="M8.4 0 H13.9 V5.5 L12 5.5 L12 1.9 L8.4 1.9 Z" fill="#0f6fd0"/></svg>
<span id="ag9" class="t f14 m" style="left:396.5px;top:509.39px"><u class="dg" style="transform:scaleX(1.044)">65</u><sup class="sp" style="left:16.55px">th</sup></span>
<span id="nm9" class="t " style="left:466.25px;top:509.14px;transform:scaleX(1.0266);">DJUWARMAN</span>
<span id="ru9" class="t " style="left:755px;top:509.14px;transform:scaleX(0.9436);">SARAF</span>
<span id="dr9" class="t " style="left:887px;top:509.14px;transform:scaleX(1.1201);">dr. Andreaw Pranolo,Sp.S</span>
<button class="cb" style="top:510.34px"></button>
<svg class="a" style="left:1124px;top:515.64px" width="16" height="12.5" viewBox="0 0 18 14" preserveAspectRatio="none"><path d="M6.6 0.8 C3.3 0.8 0.9 2.7 0.9 5.1 C0.9 6.3 1.5 7.3 2.4 8.1 L1.3 10.4 L4.6 9.1 C5.2 9.3 5.9 9.4 6.6 9.4 C9.9 9.4 12.3 7.5 12.3 5.1 C12.3 2.7 9.9 0.8 6.6 0.8 Z" fill="none" stroke="#df4f52" stroke-width="1.55" stroke-linejoin="round"/><path d="M13.3 4.3 C15.6 4.8 17.1 6.3 17.1 8.1 C17.1 9.3 16.5 10.3 15.6 11.1 L16.7 13.3 L13.4 12.1 C12.8 12.3 12.1 12.4 11.4 12.4 C9.6 12.4 8 11.8 7 10.8" fill="none" stroke="#df4f52" stroke-width="1.55" stroke-linejoin="round" stroke-linecap="round"/></svg>
<span id="py9" class="t " style="left:1226.25px;top:509.14px;transform:scaleX(1.0019);">BPJS PURNAWIRAWAN</span>
<span class="icd" style="top:510.44px"><u style="transform:scaleX(1.066)">Belum Ada</u></span>
<span class="cp" style="left:1588.8px;top:510.44px;width:89px"><i>1</i><b style="transform:scaleX(.99)">PERAWAT</b></span>
<button class="ab" style="top:510.34px"></button>
<svg class="a" style="left:1849.6px;top:516.94px" width="3" height="12" viewBox="0 0 3 12"><circle cx="1.5" cy="1.5" r="1.15" fill="#0866c6"/><circle cx="1.5" cy="5.35" r="1.15" fill="#0866c6"/><circle cx="1.5" cy="9.2" r="1.15" fill="#0866c6"/></svg>
<div class="row g" style="top:545.98px;height:42.94px"></div>
<span id="no10" class="t f14" style="left:34px;top:552.33px;transform:scaleX(0.7974);">10.</span>
<span id="dt10" class="t f14" style="left:83.75px;top:552.33px;transform:scaleX(1.0031);">10-12-2024</span>
<span id="q10" class="q" style="top:557.18px"><u style="transform:scaleX(1.044)">B7-20</u></span>
<span id="rm10" class="t f14" style="left:291px;top:552.33px;transform:scaleX(0.8926);">175187</span>
<svg class="a" style="left:378.7px;top:553.58px" width="10.3" height="15.7" viewBox="0 0 10.3 15.7" preserveAspectRatio="none"><circle cx="5.15" cy="5.15" r="4.15" fill="none" stroke="#e83e8c" stroke-width="2"/><path d="M5.15 9.3 V15.7 M2.1 12.5 H8.2" stroke="#e83e8c" stroke-width="2"/></svg>
<span id="ag10" class="t f14 f" style="left:394.6px;top:552.33px"><u class="dg" style="transform:scaleX(1.044)">46</u><sup class="sp" style="left:16.55px">th</sup></span>
<span id="nm10" class="t " style="left:466.25px;top:552.08px;transform:scaleX(0.9925);">RITA HERAWATI</span>
<span id="ru10" class="t " style="left:755px;top:552.08px;transform:scaleX(0.9436);">SARAF</span>
<span id="dr10" class="t " style="left:887px;top:552.08px;transform:scaleX(1.1201);">dr. Andreaw Pranolo,Sp.S</span>
<button class="cb" style="top:553.28px"></button>
<svg class="a" style="left:1124px;top:558.58px" width="16" height="12.5" viewBox="0 0 18 14" preserveAspectRatio="none"><path d="M6.6 0.8 C3.3 0.8 0.9 2.7 0.9 5.1 C0.9 6.3 1.5 7.3 2.4 8.1 L1.3 10.4 L4.6 9.1 C5.2 9.3 5.9 9.4 6.6 9.4 C9.9 9.4 12.3 7.5 12.3 5.1 C12.3 2.7 9.9 0.8 6.6 0.8 Z" fill="none" stroke="#df4f52" stroke-width="1.55" stroke-linejoin="round"/><path d="M13.3 4.3 C15.6 4.8 17.1 6.3 17.1 8.1 C17.1 9.3 16.5 10.3 15.6 11.1 L16.7 13.3 L13.4 12.1 C12.8 12.3 12.1 12.4 11.4 12.4 C9.6 12.4 8 11.8 7 10.8" fill="none" stroke="#df4f52" stroke-width="1.55" stroke-linejoin="round" stroke-linecap="round"/></svg>
<span id="py10" class="t " style="left:1226.25px;top:552.08px;transform:scaleX(0.9469);">BPJS PBI</span>
<span class="icd" style="top:553.38px"><u style="transform:scaleX(1.066)">Belum Ada</u></span>
<span class="cp" style="left:1588.8px;top:553.38px;width:89px"><i>1</i><b style="transform:scaleX(.99)">PERAWAT</b></span>
<button class="ab" style="top:553.28px"></button>
<svg class="a" style="left:1849.6px;top:559.88px" width="3" height="12" viewBox="0 0 3 12"><circle cx="1.5" cy="1.5" r="1.15" fill="#0866c6"/><circle cx="1.5" cy="5.35" r="1.15" fill="#0866c6"/><circle cx="1.5" cy="9.2" r="1.15" fill="#0866c6"/></svg>
<div class="row g" style="top:588.92px;height:42.94px"></div>
<span id="no11" class="t f14" style="left:34px;top:595.27px;transform:scaleX(0.6400);">11.</span>
<span id="dt11" class="t f14" style="left:83.75px;top:595.27px;transform:scaleX(1.0031);">10-12-2024</span>
<span id="q11" class="q" style="top:600.12px"><u style="transform:scaleX(0.977)">B7-21</u></span>
<span id="rm11" class="t f14" style="left:291px;top:595.27px;transform:scaleX(1.0157);">164436</span>
<svg class="a" style="left:378.7px;top:596.52px" width="10.3" height="15.7" viewBox="0 0 10.3 15.7" preserveAspectRatio="none"><circle cx="5.15" cy="5.15" r="4.15" fill="none" stroke="#e83e8c" stroke-width="2"/><path d="M5.15 9.3 V15.7 M2.1 12.5 H8.2" stroke="#e83e8c" stroke-width="2"/></svg>
<span id="ag11" class="t f14 f" style="left:394.6px;top:595.27px"><u class="dg" style="transform:scaleX(1.044)">74</u><sup class="sp" style="left:16.55px">th</sup></span>
<span id="nm11" class="t " style="left:466.25px;top:595.02px;transform:scaleX(0.9704);">SRI HERAWATI</span>
<span id="ru11" class="t " style="left:755px;top:595.02px;transform:scaleX(0.9436);">SARAF</span>
<span id="dr11" class="t " style="left:887px;top:595.02px;transform:scaleX(1.1201);">dr. Andreaw Pranolo,Sp.S</span>
<button class="cb" style="top:596.22px"></button>
<svg class="a" style="left:1124px;top:601.52px" width="16" height="12.5" viewBox="0 0 18 14" preserveAspectRatio="none"><path d="M6.6 0.8 C3.3 0.8 0.9 2.7 0.9 5.1 C0.9 6.3 1.5 7.3 2.4 8.1 L1.3 10.4 L4.6 9.1 C5.2 9.3 5.9 9.4 6.6 9.4 C9.9 9.4 12.3 7.5 12.3 5.1 C12.3 2.7 9.9 0.8 6.6 0.8 Z" fill="none" stroke="#df4f52" stroke-width="1.55" stroke-linejoin="round"/><path d="M13.3 4.3 C15.6 4.8 17.1 6.3 17.1 8.1 C17.1 9.3 16.5 10.3 15.6 11.1 L16.7 13.3 L13.4 12.1 C12.8 12.3 12.1 12.4 11.4 12.4 C9.6 12.4 8 11.8 7 10.8" fill="none" stroke="#df4f52" stroke-width="1.55" stroke-linejoin="round" stroke-linecap="round"/></svg>
<span id="py11" class="t " style="left:1226.25px;top:595.02px;transform:scaleX(1.0019);">BPJS PURNAWIRAWAN</span>
<span class="icd" style="top:596.32px"><u style="transform:scaleX(1.066)">Belum Ada</u></span>
<span class="cp" style="left:1588.8px;top:596.32px;width:89px"><i>1</i><b style="transform:scaleX(.99)">PERAWAT</b></span>
<button class="ab" style="top:596.22px"></button>
<svg class="a" style="left:1849.6px;top:602.82px" width="3" height="12" viewBox="0 0 3 12"><circle cx="1.5" cy="1.5" r="1.15" fill="#0866c6"/><circle cx="1.5" cy="5.35" r="1.15" fill="#0866c6"/><circle cx="1.5" cy="9.2" r="1.15" fill="#0866c6"/></svg>
<div class="row g" style="top:631.86px;height:42.94px"></div>
<span id="no12" class="t f14" style="left:34px;top:638.21px;transform:scaleX(0.7974);">12.</span>
<span id="dt12" class="t f14" style="left:83.75px;top:638.21px;transform:scaleX(1.0031);">10-12-2024</span>
<span id="q12" class="q" style="top:643.06px"><u style="transform:scaleX(1.044)">B7-22</u></span>
<span id="rm12" class="t f14" style="left:291px;top:638.21px;transform:scaleX(0.9953);">681768</span>
<svg class="a" style="left:378.7px;top:639.46px" width="10.3" height="15.7" viewBox="0 0 10.3 15.7" preserveAspectRatio="none"><circle cx="5.15" cy="5.15" r="4.15" fill="none" stroke="#e83e8c" stroke-width="2"/><path d="M5.15 9.3 V15.7 M2.1 12.5 H8.2" stroke="#e83e8c" stroke-width="2"/></svg>
<span id="ag12" class="t f14 f" style="left:394.6px;top:638.21px"><u class="dg" style="transform:scaleX(1.044)">64</u><sup class="sp" style="left:16.55px">th</sup></span>
<span id="nm12" class="t " style="left:466.25px;top:637.96px;transform:scaleX(1.0383);">FATMAYANA</span>
<span id="ru12" class="t " style="left:755px;top:637.96px;transform:scaleX(0.9436);">SARAF</span>
<span id="dr12" class="t " style="left:887px;top:637.96px;transform:scaleX(1.1201);">dr. Andreaw Pranolo,Sp.S</span>
<button class="cb" style="top:639.16px"></button>
<svg class="a" style="left:1124px;top:644.46px" width="16" height="12.5" viewBox="0 0 18 14" preserveAspectRatio="none"><path d="M6.6 0.8 C3.3 0.8 0.9 2.7 0.9 5.1 C0.9 6.3 1.5 7.3 2.4 8.1 L1.3 10.4 L4.6 9.1 C5.2 9.3 5.9 9.4 6.6 9.4 C9.9 9.4 12.3 7.5 12.3 5.1 C12.3 2.7 9.9 0.8 6.6 0.8 Z" fill="none" stroke="#df4f52" stroke-width="1.55" stroke-linejoin="round"/><path d="M13.3 4.3 C15.6 4.8 17.1 6.3 17.1 8.1 C17.1 9.3 16.5 10.3 15.6 11.1 L16.7 13.3 L13.4 12.1 C12.8 12.3 12.1 12.4 11.4 12.4 C9.6 12.4 8 11.8 7 10.8" fill="none" stroke="#df4f52" stroke-width="1.55" stroke-linejoin="round" stroke-linecap="round"/></svg>
<span id="py12" class="t " style="left:1226.25px;top:637.96px;transform:scaleX(0.9469);">BPJS PBI</span>
<span class="icd" style="top:639.26px"><u style="transform:scaleX(1.066)">Belum Ada</u></span>
<span class="cp" style="left:1588.8px;top:639.26px;width:89px"><i>1</i><b style="transform:scaleX(.99)">PERAWAT</b></span>
<button class="ab" style="top:639.16px"></button>
<svg class="a" style="left:1849.6px;top:645.76px" width="3" height="12" viewBox="0 0 3 12"><circle cx="1.5" cy="1.5" r="1.15" fill="#0866c6"/><circle cx="1.5" cy="5.35" r="1.15" fill="#0866c6"/><circle cx="1.5" cy="9.2" r="1.15" fill="#0866c6"/></svg>
<div class="row s" style="top:674.80px;height:40.00px"></div>
<span id="no13" class="t f14" style="left:34px;top:681.15px;transform:scaleX(0.7974);">13.</span>
<span id="dt13" class="t f14" style="left:83.75px;top:681.15px;transform:scaleX(1.0031);">10-12-2024</span>
<span id="q13" class="q" style="top:686.00px"><u style="transform:scaleX(1.044)">B7-23</u></span>
<span id="rm13" class="t f14" style="left:291px;top:681.15px;transform:scaleX(1.0981);">835654</span>
<svg class="a" style="left:378.7px;top:682.4px" width="10.3" height="15.7" viewBox="0 0 10.3 15.7" preserveAspectRatio="none"><circle cx="5.15" cy="5.15" r="4.15" fill="none" stroke="#e83e8c" stroke-width="2"/><path d="M5.15 9.3 V15.7 M2.1 12.5 H8.2" stroke="#e83e8c" stroke-width="2"/></svg>
<span id="ag13" class="t f14 f" style="left:394.6px;top:681.15px"><u class="dg" style="transform:scaleX(1.044)">42</u><sup class="sp" style="left:16.55px">th</sup></span>
<span id="nm13" class="t " style="left:466.25px;top:680.9px;transform:scaleX(0.9512);">SITI SURYANTI</span>
<span id="ru13" class="t " style="left:755px;top:680.9px;transform:scaleX(0.9436);">SARAF</span>
<span id="dr13" class="t " style="left:887px;top:680.9px;transform:scaleX(1.1201);">dr. Andreaw Pranolo,Sp.S</span>
<button class="cb" style="top:682.10px"></button>
<svg class="a" style="left:1124px;top:687.4px" width="16" height="12.5" viewBox="0 0 18 14" preserveAspectRatio="none"><path d="M6.6 0.8 C3.3 0.8 0.9 2.7 0.9 5.1 C0.9 6.3 1.5 7.3 2.4 8.1 L1.3 10.4 L4.6 9.1 C5.2 9.3 5.9 9.4 6.6 9.4 C9.9 9.4 12.3 7.5 12.3 5.1 C12.3 2.7 9.9 0.8 6.6 0.8 Z" fill="none" stroke="#df4f52" stroke-width="1.55" stroke-linejoin="round"/><path d="M13.3 4.3 C15.6 4.8 17.1 6.3 17.1 8.1 C17.1 9.3 16.5 10.3 15.6 11.1 L16.7 13.3 L13.4 12.1 C12.8 12.3 12.1 12.4 11.4 12.4 C9.6 12.4 8 11.8 7 10.8" fill="none" stroke="#df4f52" stroke-width="1.55" stroke-linejoin="round" stroke-linecap="round"/></svg>
<span id="py13" class="t " style="left:1226.25px;top:680.9px;transform:scaleX(0.9469);">BPJS PBI</span>
<span class="icd" style="top:682.20px"><u style="transform:scaleX(1.066)">Belum Ada</u></span>
<button class="ab" style="top:682.10px"></button>
<svg class="a" style="left:1849.6px;top:688.70px" width="3" height="12" viewBox="0 0 3 12"><circle cx="1.5" cy="1.5" r="1.15" fill="#0866c6"/><circle cx="1.5" cy="5.35" r="1.15" fill="#0866c6"/><circle cx="1.5" cy="9.2" r="1.15" fill="#0866c6"/></svg>
<div class="row g" style="top:714.80px;height:42.94px"></div>
<span id="no14" class="t f14" style="left:34px;top:721.15px;transform:scaleX(0.7974);">14.</span>
<span id="dt14" class="t f14" style="left:83.75px;top:721.15px;transform:scaleX(1.0031);">10-12-2024</span>
<span id="q14" class="q" style="top:726.00px"><u style="transform:scaleX(1.044)">B7-24</u></span>
<span id="rm14" class="t f14" style="left:291px;top:721.15px;transform:scaleX(1.0981);">639828</span>
<svg class="a" style="left:378.1px;top:723.4px" width="13.9" height="13.9" viewBox="0 0 13.9 13.9" preserveAspectRatio="none"><circle cx="5.6" cy="8.3" r="4.6" fill="none" stroke="#0f6fd0" stroke-width="2"/><path d="M8.8 5.1 L12.4 1.5" stroke="#0f6fd0" stroke-width="2"/><path d="M8.4 0 H13.9 V5.5 L12 5.5 L12 1.9 L8.4 1.9 Z" fill="#0f6fd0"/></svg>
<span id="ag14" class="t f14 m" style="left:396.5px;top:721.15px"><u class="dg" style="transform:scaleX(1.044)">68</u><sup class="sp" style="left:16.55px">th</sup></span>
<span id="nm14" class="t " style="left:466.25px;top:720.9px;transform:scaleX(1.0144);">SUTARMAN WANGSA TARUNA</span>
<span id="ru14" class="t " style="left:755px;top:720.9px;transform:scaleX(0.9436);">SARAF</span>
<span id="dr14" class="t " style="left:887px;top:720.9px;transform:scaleX(1.1201);">dr. Andreaw Pranolo,Sp.S</span>
<button class="cb" style="top:722.10px"></button>
<svg class="a" style="left:1124px;top:727.4px" width="16" height="12.5" viewBox="0 0 18 14" preserveAspectRatio="none"><path d="M6.6 0.8 C3.3 0.8 0.9 2.7 0.9 5.1 C0.9 6.3 1.5 7.3 2.4 8.1 L1.3 10.4 L4.6 9.1 C5.2 9.3 5.9 9.4 6.6 9.4 C9.9 9.4 12.3 7.5 12.3 5.1 C12.3 2.7 9.9 0.8 6.6 0.8 Z" fill="none" stroke="#df4f52" stroke-width="1.55" stroke-linejoin="round"/><path d="M13.3 4.3 C15.6 4.8 17.1 6.3 17.1 8.1 C17.1 9.3 16.5 10.3 15.6 11.1 L16.7 13.3 L13.4 12.1 C12.8 12.3 12.1 12.4 11.4 12.4 C9.6 12.4 8 11.8 7 10.8" fill="none" stroke="#df4f52" stroke-width="1.55" stroke-linejoin="round" stroke-linecap="round"/></svg>
<span id="py14" class="t " style="left:1226.25px;top:720.9px;transform:scaleX(1.0018);">BPJS DINAS - PNS</span>
<span class="icd" style="top:722.20px"><u style="transform:scaleX(1.066)">Belum Ada</u></span>
<span class="cp" style="left:1588.8px;top:722.20px;width:89px"><i>1</i><b style="transform:scaleX(.99)">PERAWAT</b></span>
<button class="ab" style="top:722.10px"></button>
<svg class="a" style="left:1849.6px;top:728.70px" width="3" height="12" viewBox="0 0 3 12"><circle cx="1.5" cy="1.5" r="1.15" fill="#0866c6"/><circle cx="1.5" cy="5.35" r="1.15" fill="#0866c6"/><circle cx="1.5" cy="9.2" r="1.15" fill="#0866c6"/></svg>
<div class="row g" style="top:757.74px;height:42.94px"></div>
<span id="no15" class="t f14" style="left:34px;top:764.09px;transform:scaleX(0.7974);">15.</span>
<span id="dt15" class="t f14" style="left:83.75px;top:764.09px;transform:scaleX(1.0031);">10-12-2024</span>
<span id="q15" class="q" style="top:768.94px"><u style="transform:scaleX(1.044)">B7-25</u></span>
<span id="rm15" class="t f14" style="left:291px;top:764.09px;transform:scaleX(1.0157);">004102</span>
<svg class="a" style="left:378.7px;top:765.34px" width="10.3" height="15.7" viewBox="0 0 10.3 15.7" preserveAspectRatio="none"><circle cx="5.15" cy="5.15" r="4.15" fill="none" stroke="#e83e8c" stroke-width="2"/><path d="M5.15 9.3 V15.7 M2.1 12.5 H8.2" stroke="#e83e8c" stroke-width="2"/></svg>
<span id="ag15" class="t f14 f" style="left:394.6px;top:764.09px"><u class="dg" style="transform:scaleX(1.044)">54</u><sup class="sp" style="left:16.55px">th</sup></span>
<span id="nm15" class="t " style="left:466.25px;top:763.84px;transform:scaleX(0.9888);">NENEH ACIM</span>
<span id="ru15" class="t " style="left:755px;top:763.84px;transform:scaleX(0.9436);">SARAF</span>
<span id="dr15" class="t " style="left:887px;top:763.84px;transform:scaleX(1.1201);">dr. Andreaw Pranolo,Sp.S</span>
<button class="cb" style="top:765.04px"></button>
<svg class="a" style="left:1124px;top:770.34px" width="16" height="12.5" viewBox="0 0 18 14" preserveAspectRatio="none"><path d="M6.6 0.8 C3.3 0.8 0.9 2.7 0.9 5.1 C0.9 6.3 1.5 7.3 2.4 8.1 L1.3 10.4 L4.6 9.1 C5.2 9.3 5.9 9.4 6.6 9.4 C9.9 9.4 12.3 7.5 12.3 5.1 C12.3 2.7 9.9 0.8 6.6 0.8 Z" fill="none" stroke="#df4f52" stroke-width="1.55" stroke-linejoin="round"/><path d="M13.3 4.3 C15.6 4.8 17.1 6.3 17.1 8.1 C17.1 9.3 16.5 10.3 15.6 11.1 L16.7 13.3 L13.4 12.1 C12.8 12.3 12.1 12.4 11.4 12.4 C9.6 12.4 8 11.8 7 10.8" fill="none" stroke="#df4f52" stroke-width="1.55" stroke-linejoin="round" stroke-linecap="round"/></svg>
<span id="py15" class="t " style="left:1226.25px;top:763.84px;transform:scaleX(1.0019);">BPJS PURNAWIRAWAN</span>
<span class="icd" style="top:765.14px"><u style="transform:scaleX(1.066)">Belum Ada</u></span>
<span class="cp" style="left:1588.8px;top:765.14px;width:89px"><i>1</i><b style="transform:scaleX(.99)">PERAWAT</b></span>
<button class="ab" style="top:765.04px"></button>
<svg class="a" style="left:1849.6px;top:771.64px" width="3" height="12" viewBox="0 0 3 12"><circle cx="1.5" cy="1.5" r="1.15" fill="#0866c6"/><circle cx="1.5" cy="5.35" r="1.15" fill="#0866c6"/><circle cx="1.5" cy="9.2" r="1.15" fill="#0866c6"/></svg>
<div class="row g" style="top:800.68px;height:6px;border:0"></div>
<div class="dl" style="top:204px"></div>
<div class="dl" style="top:247px"></div>
<div class="dl" style="top:290px"></div>
<div class="dl" style="top:333px"></div>
<div class="dl" style="top:376px"></div>
<div class="dl" style="top:416px"></div>
<div class="dl" style="top:459px"></div>
<div class="dl" style="top:502px"></div>
<div class="dl" style="top:545px"></div>
<div class="dl" style="top:588px"></div>
<div class="dl" style="top:630px"></div>
<div class="dl" style="top:673px"></div>
<div class="dl" style="top:713px"></div>
<div class="dl" style="top:756px"></div>
<div class="dl" style="top:799px"></div>
<div class="a" style="left:1872px;top:99px;width:20.7px;height:703.2px;background:#f1f1f1"></div>
<div class="a" style="left:1874.2px;top:119.8px;width:16.7px;height:25.6px;background:#c1c1c1"></div>
<svg class="a" style="left:1878px;top:107.3px" width="9.2" height="5.6" viewBox="0 0 9.2 5.6"><path d="M0 5.6 L4.6 0 L9.2 5.6Z" fill="#a3a3a3"/></svg>
<svg class="a" style="left:1877.9px;top:788.4px" width="9.2" height="5.5" viewBox="0 0 9.2 5.6"><path d="M0 0 L4.6 5.6 L9.2 0Z" fill="#505050"/></svg>
<div class="a" style="left:27px;top:802.2px;width:1845px;height:21.2px;background:#f1f1f1"></div>
<div class="a" style="left:48px;top:804.9px;width:1793.9px;height:16.7px;background:#c1c1c1"></div>
<svg class="a" style="left:35px;top:808.5px" width="5.6" height="9.2" viewBox="0 0 5.6 9.2"><path d="M5.6 0 L0 4.6 L5.6 9.2Z" fill="#a3a3a3"/></svg>
<svg class="a" style="left:1858.8px;top:808.5px" width="5.4" height="9.3" viewBox="0 0 5.6 9.2"><path d="M0 0 L5.6 4.6 L0 9.2Z" fill="#505050"/></svg>
<div class="a" style="left:15px;top:10px;width:111px;height:55px;box-sizing:border-box;border:10px solid #ff0000;border-radius:5px"></div>
<svg class="a" style="left:0;top:0" width="260" height="200" viewBox="0 0 260 200"><path d="M97.3 70 L124.6 85.5 L119.9 89.1 L173.8 164.1 L166.2 169.9 L110.1 96.5 L105.2 100.3 Z" fill="#ff0000"/><circle cx="170" cy="167" r="4.8" fill="#ff0000"/></svg>
</body></html>
